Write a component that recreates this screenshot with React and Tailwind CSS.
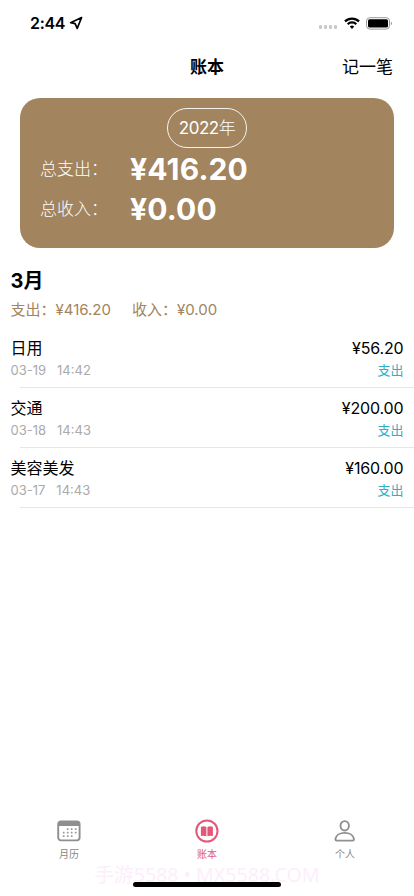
import React from 'react';

const records = [
  { name: '日用', date: '03-19', time: '14:42', amount: '¥56.20' },
  { name: '交通', date: '03-18', time: '14:43', amount: '¥200.00' },
  { name: '美容美发', date: '03-17', time: '14:43', amount: '¥160.00' },
];

function StatusBar() {
  return (
    <div className="flex h-11 items-center pl-[30px] pr-[21px] pt-[2px]">
      <span className="text-[16px] font-semibold leading-5 tracking-[-0.3px]">2:44</span>
      <svg className="ml-[4px]" width="14" height="14" viewBox="0 0 14 14" fill="none" stroke="#000" strokeWidth="1.7" strokeLinejoin="round">
        <path d="M12.600 1.500 1.600 6.700 6.100 7.600 8.200 12.400Z" />
      </svg>
      <div className="ml-auto mt-[8px] flex gap-[2px]">
        {[0, 1, 2, 3].map((i) => (
          <span key={i} className="h-[4px] w-[3px] rounded-[1px] bg-[#cacaca]" />
        ))}
      </div>
      <svg className="ml-[7px]" width="16" height="12" viewBox="0 0 16 12" fill="none" stroke="#000" strokeWidth="2.2">
        <path d="M1 4.4a10 10 0 0 1 14 0" />
        <path d="M3.7 7.2a6.1 6.1 0 0 1 8.6 0" />
        <path d="M8 12 5.8 9.6a3.2 3.2 0 0 1 4.4 0Z" fill="#000" stroke="none" />
      </svg>
      <svg className="ml-[6px]" width="27" height="13" viewBox="0 0 27 13">
        <rect x=".5" y=".7" width="23" height="11.4" rx="3.3" fill="none" stroke="#999" />
        <rect x="2" y="2.300" width="20" height="8.200" rx="1.600" />
        <path d="M24.800 4.500c1.600.6 1.600 3.200 0 3.800Z" fill="#999" />
      </svg>
    </div>
  );
}

function CalendarIcon() {
  const dots = [[11, 10], [15, 10], [19, 10], [7, 13.5], [11, 13.5], [15, 13.5], [19, 13.5], [7, 17], [11, 17], [15, 17]];
  return (
    <svg width="26" height="24" viewBox="0 0 26 24">
      <rect x="2.2" y="2.4" width="21.4" height="19" rx="2.8" fill="none" stroke="#8f8f8f" strokeWidth="1.9" />
      <path d="M2 7V4.500Q2 2 4.500 2h17Q24 2 24 4.500V7Z" fill="#8f8f8f" />
      {dots.map(([x, y]) => (
        <rect key={x + '-' + y} x={x - 0.2} y={y - 0.8} width="1.8" height="1.8" rx=".4" fill="#999" />
      ))}
    </svg>
  );
}

function BookIcon() {
  return (
    <svg width="26" height="24" viewBox="0 0 26 24" fill="none">
      <circle cx="12.9" cy="12" r="10.6" stroke="#e3587a" strokeWidth="2" />
      <path d="M6.900 7.900q3-1.200 5.500.1v9.200q-2.800-1-5.500-.2ZM13.400 8q2.500-1.300 5.500-.1v9.100q-2.700-.8-5.500.2Z" fill="#e3587a" />
    </svg>
  );
}

function PersonIcon() {
  return (
    <svg width="26" height="24" viewBox="0 0 26 24" fill="none" stroke="#8f8f8f" strokeWidth="1.9">
      <ellipse cx="12.7" cy="6.8" rx="4.2" ry="4.7" />
      <path d="M4.900 21.600q-1.500 0-1.500-1.400c.6-4 4.600-6.300 9.300-6.300s8.700 2.300 9.300 6.300q0 1.400-1.500 1.400Z" />
    </svg>
  );
}

function Tab({ icon, label, active }) {
  return (
    <div className="flex flex-1 flex-col items-center">
      {icon}
      <span className={'mt-[4px] text-[10px] leading-[14px] ' + (active ? 'text-[#e3587a]' : 'text-[#858585]')}>{label}</span>
    </div>
  );
}

function TotalRow({ label, value }) {
  return (
    <div className="flex h-10 items-center pl-5">
      <span className="w-[90px] pt-1 text-[17px] font-light">{label}</span>
      <span className="pt-[1px] text-[30px] font-bold leading-10 tracking-[0.15px]">{value}</span>
    </div>
  );
}

export default function App() {
  return (
    <div
      lang="zh-CN"
      className="relative flex h-[896px] w-[414px] flex-col overflow-hidden bg-white font-['Inter','Noto_Sans_CJK_SC',sans-serif] text-black"
    >
      <StatusBar />
      <header className="grid h-11 grid-cols-3 items-center pt-[3px] text-[17px]">
        <h1 className="col-start-2 text-center font-semibold">账本</h1>
        <span className="pr-[21px] text-right">记一笔</span>
      </header>

      <section className="mx-5 mt-[10px] h-[150px] rounded-[20px] bg-[#a2845e] pt-[10px] text-white">
        <div className="mx-auto flex h-10 w-20 items-center justify-center rounded-full border border-white/90 text-[17px]">
          <span className="pt-[2px] tracking-[-0.5px]">2022<span className="font-light">年</span></span>
        </div>
        <TotalRow label="总支出：" value="¥416.20" />
        <TotalRow label="总收入：" value="¥0.00" />
      </section>

      <section className="mt-[19px] pl-[10.5px]">
        <h2 className="text-[20px] font-bold leading-7">3月</h2>
        <p className="mt-[4px] flex text-[15px] leading-[22px] text-[#a2845e]">
          <span className="w-[121.5px]">支出：¥416.20</span>
          <span>收入：¥0.00</span>
        </p>
      </section>

      <ul className="mt-[7px]">
        {records.map((r) => (
          <li key={r.date}>
            <div className="flex h-[59px] justify-between pl-[10.5px] pr-[10.5px] pt-[8px]">
              <div>
                <p className="text-[16px] leading-6">{r.name}</p>
                <p className="flex text-[13px] leading-5 text-[#aaa]">
                  <span className="mr-[11px]">{r.date}</span>
                  <span>{r.time}</span>
                </p>
              </div>
              <div className="text-right">
                <p className="text-[16px] leading-6 tracking-[-0.15px]">{r.amount}</p>
                <p className="text-[13px] leading-5 text-[#30b0c7]">支出</p>
              </div>
            </div>
            <div className="ml-5 h-px bg-[#e6e6e8]" />
          </li>
        ))}
      </ul>

      <nav className="mt-auto flex h-[77px]">
        <Tab icon={<CalendarIcon />} label="月历" />
        <Tab icon={<BookIcon />} label="账本" active />
        <Tab icon={<PersonIcon />} label="个人" />
      </nav>

      <div className="absolute left-0 top-[861px] w-full whitespace-nowrap text-center font-['Noto_Sans','Noto_Sans_CJK_SC',sans-serif] text-[19.6px] leading-7 text-[#fdeefb]">
        手游5588 • MX5588.COM
      </div>
      <div className="absolute left-[133px] top-[882px] h-[5px] w-[148px] rounded-full bg-black" />
    </div>
  );
}
